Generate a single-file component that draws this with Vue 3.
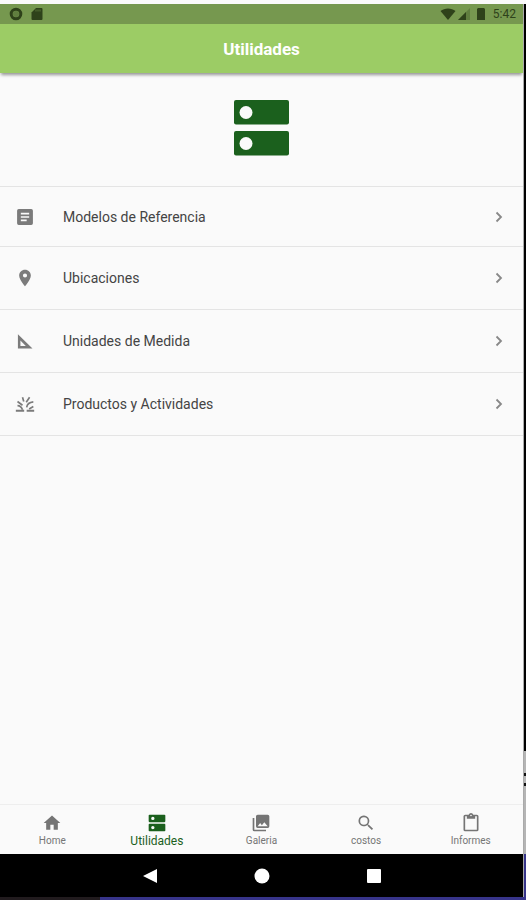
<script setup>
import { ref } from 'vue'

const active = ref('Utilidades')

const options = [
  { label: 'Modelos de Referencia', icon: 'article' },
  { label: 'Ubicaciones', icon: 'place' },
  { label: 'Unidades de Medida', icon: 'ruler' },
  { label: 'Productos y Actividades', icon: 'burst' }
]

const tabs = [
  { label: 'Home', icon: 'home' },
  { label: 'Utilidades', icon: 'storage' },
  { label: 'Galeria', icon: 'gallery' },
  { label: 'costos', icon: 'search' },
  { label: 'Informes', icon: 'clipboard' }
]

const paths = {
  article: 'M19.500 2.500h-15a2 2 0 0 0-2 2v15a2 2 0 0 0 2 2h15a2 2 0 0 0 2-2v-15a2 2 0 0 0-2-2zM14 17H7v-2h7v2zm3-4H7v-2h10v2zm0-4H7V7h10v2z',
  place: 'M12 2C8.100 2 5 5.100 5 9c0 5.200 7 13 7 13s7-7.800 7-13c0-3.900-3.100-7-7-7zm0 9.500a2.500 2.500 0 1 1 0-5 2.500 2.500 0 0 1 0 5z',
  ruler: 'M3.500 4v17H21L3.500 4zm3 7.500 6.500 6.500H6.500v-6.500z',
  home: 'M10 20v-6h4v6h5v-8h3L12 3 2 12h3v8z',
  storage: 'M21 13H3a1 1 0 0 0-1 1v7a1 1 0 0 0 1 1h18a1 1 0 0 0 1-1v-7a1 1 0 0 0-1-1zM7 19.500a2 2 0 1 1 0-4 2 2 0 0 1 0 4zM21 2H3a1 1 0 0 0-1 1v7a1 1 0 0 0 1 1h18a1 1 0 0 0 1-1V3a1 1 0 0 0-1-1zM7 8.500a2 2 0 1 1 0-4 2 2 0 0 1 0 4z',
  gallery: 'M22 16V4a2 2 0 0 0-2-2H8a2 2 0 0 0-2 2v12a2 2 0 0 0 2 2h12a2 2 0 0 0 2-2zm-11-4 2.030 2.710L16 11l4 5H8l3-4zM2 6v14a2 2 0 0 0 2 2h14v-2H4V6H2z',
  search: 'M15.500 14h-.790l-.280-.270A6.500 6.500 0 1 0 13.730 14.430l.270.280v.790l5 4.990L20.490 19l-4.990-5zm-6 0a4.500 4.500 0 1 1 0-9 4.500 4.500 0 0 1 0 9z',
  clipboard: 'M19 2h-4.180a3 3 0 0 0-5.640 0H5a2 2 0 0 0-2 2v16a2 2 0 0 0 2 2h14a2 2 0 0 0 2-2V4a2 2 0 0 0-2-2zm-7 0a1 1 0 1 1 0 2 1 1 0 0 1 0-2zm7 18H5V4h2v3h10V4h2v16z'
}
</script>

<template>
  <div class="desktop">
    <div class="device">
      <div class="status">
        <svg class="status-icon" viewBox="0 0 14 14" aria-hidden="true">
          <circle cx="7" cy="7" r="4.800" fill="none" stroke="currentColor" stroke-width="3" />
          <circle cx="7" cy="7" r="3" fill="currentColor" opacity="0.300" />
        </svg>
        <svg class="status-icon sd" viewBox="0 0 14 14" aria-hidden="true">
          <path fill="currentColor" d="M6 1h5.500a1 1 0 0 1 1 1v10a1 1 0 0 1-1 1h-9a1 1 0 0 1-1-1V5.500z" />
          <path d="M6 2.500v2M8 2.500v2M10 2.500v2" stroke="#76984f" stroke-width="0.600" />
        </svg>
        <span class="spacer"></span>
        <svg class="wifi" viewBox="0 0 16 14" aria-hidden="true">
          <path fill="currentColor" d="M8 13 .5 4C4.500.500 11.500.500 15.500 4z" />
        </svg>
        <svg class="status-icon" viewBox="0 0 14 14" aria-hidden="true">
          <path fill="currentColor" opacity="0.300" d="M13 1v12H1z" />
          <path fill="currentColor" d="M9 5v8H1z" />
        </svg>
        <svg class="battery" viewBox="0 0 10 14" aria-hidden="true">
          <path fill="currentColor" d="M2 1h6v.5h1V13H1V1.500h1z" />
        </svg>
        <time class="clock">5:42</time>
      </div>

      <header class="appbar">
        <h1>Utilidades</h1>
      </header>

      <main class="content">
        <div class="hero">
          <svg class="hero-icon" viewBox="0 0 56 56" aria-hidden="true">
            <rect x="0" y="0" width="55" height="24.500" rx="2" />
            <rect x="0" y="31" width="55" height="24.500" rx="2" />
            <circle cx="12" cy="12.500" r="6.500" />
            <circle cx="12" cy="43.500" r="6.500" />
          </svg>
        </div>

        <ul class="options">
          <li v-for="item in options" :key="item.label">
            <button type="button" class="option">
              <svg class="option-icon" viewBox="0 0 24 24" aria-hidden="true">
                <g v-if="item.icon === 'burst'" fill="none" stroke="currentColor" stroke-width="2">
                  <path d="M9 4l1.500 5M17.500 4l-4 6M3 9l6 4.500M22 9.500c-5 .5-7.500 3-8 6.500M3 14c3.500 0 5 2 6 5M22 15l-5 3" />
                  <path d="M1 20h10M14 20h9" stroke-width="2.500" />
                </g>
                <path v-else fill="currentColor" fill-rule="evenodd" :d="paths[item.icon]" />
              </svg>
              <span class="option-label">{{ item.label }}</span>
              <svg class="chevron" viewBox="0 0 20 20" aria-hidden="true">
                <path d="M7.500 5.500l4.500 4.500-4.500 4.500" fill="none" stroke="currentColor" stroke-width="1.800" />
              </svg>
            </button>
          </li>
        </ul>
      </main>

      <nav class="tabs">
        <button
          v-for="tab in tabs"
          :key="tab.label"
          type="button"
          class="tab"
          :class="{ active: active === tab.label }"
          @click="active = tab.label"
        >
          <svg class="tab-icon" viewBox="0 0 24 24" aria-hidden="true">
            <path fill="currentColor" fill-rule="evenodd" :d="paths[tab.icon]" />
          </svg>
          <span>{{ tab.label }}</span>
        </button>
      </nav>

      <div class="system">
        <button type="button" aria-label="Atrás">
          <svg viewBox="0 0 16 16"><path d="M15 1v14L1 8z" fill="#fff" /></svg>
        </button>
        <button type="button" aria-label="Inicio">
          <svg viewBox="0 0 16 16"><circle cx="8" cy="8" r="7.500" fill="#fff" /></svg>
        </button>
        <button type="button" aria-label="Recientes">
          <svg viewBox="0 0 16 16"><rect x="1" y="1" width="14" height="14" rx="1" fill="#fff" /></svg>
        </button>
      </div>
    </div>

    <div class="edge" aria-hidden="true">
      <div class="edge-dark"></div>
      <div class="edge-grey"><i></i><i></i></div>
      <div class="edge-blue"></div>
    </div>
    <div class="floor" aria-hidden="true"></div>
  </div>
</template>

<style>
body {
  margin: 0;
}
</style>

<style scoped>
.desktop {
  box-sizing: border-box;
  min-height: 100vh;
  padding-top: 4px;
  display: grid;
  grid-template-columns: 1fr 3px;
  grid-template-rows: 1fr 3px;
  background: #fafafa;
  font-family: Roboto, "Liberation Sans", sans-serif;
}

.device {
  display: flex;
  flex-direction: column;
  background: #fafafa;
}

button {
  margin: 0;
  padding: 0;
  border: 0;
  background: none;
  font: inherit;
  color: inherit;
  cursor: pointer;
}

svg {
  display: block;
  flex: none;
}

.status {
  display: flex;
  align-items: center;
  height: 20px;
  padding: 0 7px 0 9px;
  background: #76984f;
  color: #2e421a;
}

.status-icon {
  width: 14px;
  height: 14px;
}

.sd {
  margin-left: 7px;
}

.spacer {
  flex: 1;
}

.wifi {
  width: 16px;
  height: 14px;
  margin-right: 1px;
}

.battery {
  width: 10px;
  height: 14px;
  margin: 0 7px 0 5px;
}

.clock {
  font-size: 12px;
  line-height: 20px;
}

.appbar {
  display: flex;
  align-items: center;
  justify-content: center;
  height: 49px;
  background: #9ccc65;
  box-shadow: 0 3px 3px -1px rgba(0, 0, 0, 0.4);
}

h1 {
  margin: 0;
  font-size: 17px;
  line-height: 24px;
  font-weight: 700;
  color: #fff;
}

.content {
  flex: 1;
}

.hero {
  display: flex;
  justify-content: center;
  padding: 27px 0 30px;
}

.hero-icon {
  width: 56px;
  height: 56px;
}

.hero-icon rect {
  fill: #1b601d;
}

.hero-icon circle {
  fill: #fafafa;
}

.options {
  margin: 0;
  padding: 0;
  list-style: none;
  border-top: 1px solid #e4e4e4;
}

.options li {
  border-bottom: 1px solid #e4e4e4;
}

.option {
  display: flex;
  align-items: center;
  width: 100%;
  height: 62px;
  padding: 0 14px 0 15px;
  text-align: left;
}

.options li:first-child .option {
  height: 59px;
}

.option-icon {
  width: 20px;
  height: 20px;
  color: #7b7b7b;
}

.option-label {
  flex: 1;
  margin-left: 28px;
  font-size: 14px;
  line-height: 20px;
  color: #444;
}

.chevron {
  width: 20px;
  height: 20px;
  color: #888;
}

.tabs {
  display: grid;
  grid-template-columns: repeat(5, 1fr);
  height: 49px;
  border-top: 1px solid #eee;
}

.tab {
  display: flex;
  flex-direction: column;
  align-items: center;
  justify-content: center;
  padding-top: 3px;
  font-size: 10px;
  line-height: 16px;
  color: #757575;
}

.tab-icon {
  width: 20px;
  height: 20px;
}

.tab.active {
  font-size: 12px;
  color: #1b601d;
}

.system {
  display: flex;
  align-items: center;
  justify-content: center;
  gap: 96px;
  height: 43px;
  background: #000;
}

.system svg {
  width: 16px;
  height: 16px;
}

.edge {
  display: flex;
  flex-direction: column;
  border-left: 1px solid #aaa;
}

.edge-dark {
  flex: 1;
  background: #000;
}

.edge-grey {
  display: flex;
  flex-direction: column;
  gap: 7px;
  height: 103px;
  background: #b5b5b5;
}

.edge-grey i {
  height: 3px;
  background: #111;
}

.edge-grey i:first-child {
  margin-top: 22px;
}

.edge-blue {
  height: 43px;
  background: #37348a;
}

.floor {
  grid-column: 1 / -1;
  background: linear-gradient(90deg, #211b1e 19%, #37348a 19%);
}
</style>
